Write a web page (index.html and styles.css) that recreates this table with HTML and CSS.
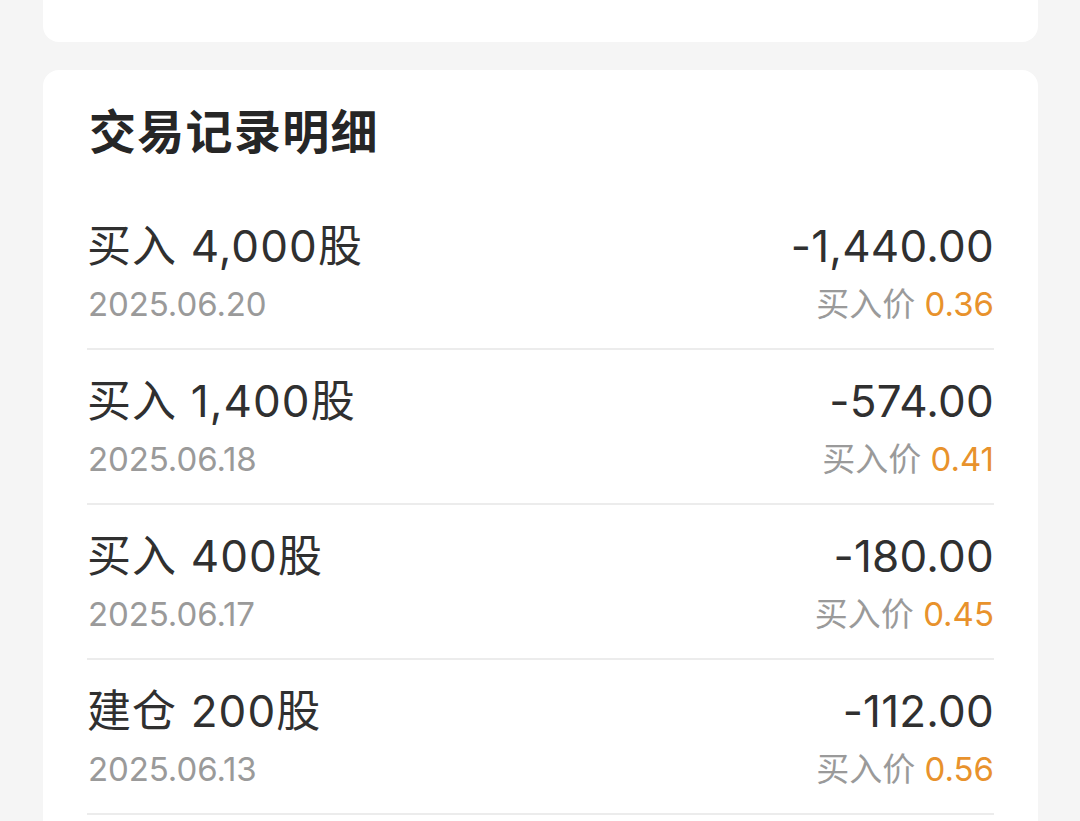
FILE: index.html
```html
<!DOCTYPE html>
<html lang="zh-CN">
<head>
<meta charset="utf-8">
<link rel="stylesheet" href="styles.css">
</head>
<body>
<div class="page">
  <div class="card card-top"></div>
  <div class="card card-records">
    <h2 class="title">交易记录明细</h2>
    <div class="row">
      <div class="col-left">
        <div class="main">买入 4,000股</div>
        <div class="date">2025.06.20</div>
      </div>
      <div class="col-right">
        <div class="amount">-1,440.00</div>
        <div class="price"><span class="label">买入价</span> <span class="val">0.36</span></div>
      </div>
    </div>
    <div class="row">
      <div class="col-left">
        <div class="main">买入 1,400股</div>
        <div class="date">2025.06.18</div>
      </div>
      <div class="col-right">
        <div class="amount">-574.00</div>
        <div class="price"><span class="label">买入价</span> <span class="val">0.41</span></div>
      </div>
    </div>
    <div class="row">
      <div class="col-left">
        <div class="main">买入 400股</div>
        <div class="date">2025.06.17</div>
      </div>
      <div class="col-right">
        <div class="amount">-180.00</div>
        <div class="price"><span class="label">买入价</span> <span class="val">0.45</span></div>
      </div>
    </div>
    <div class="row">
      <div class="col-left">
        <div class="main">建仓 200股</div>
        <div class="date">2025.06.13</div>
      </div>
      <div class="col-right">
        <div class="amount">-112.00</div>
        <div class="price"><span class="label">买入价</span> <span class="val">0.56</span></div>
      </div>
    </div>
  </div>
</div>
</body>
</html>
```
FILE: styles.css
```css
html, body {
  margin: 0;
  padding: 0;
  background: #f5f5f5;
  overflow: hidden;
}
body {
  font-family: Inter, "Noto Sans CJK SC", sans-serif;
  color: #303030;
}
.page {
  padding: 0 42px 0 43px;
  display: flex;
  flex-direction: column;
  gap: 28px;
}
.card {
  background: #ffffff;
  border-radius: 16px;
}
.card-top {
  height: 62px;
  margin-top: -20px;
}
.card-records {
  padding: 31px 44px 7px 44px;
  border-bottom-left-radius: 0;
  border-bottom-right-radius: 0;
}
.title {
  margin: 0 0 38px 2px;
  font-family: "Noto Sans CJK SC", sans-serif;
  font-size: 47px;
  line-height: 56px;
  font-weight: 700;
  color: #262626;
  letter-spacing: 1.3px;
}
.row {
  display: flex;
  justify-content: space-between;
  padding-top: 22px;
  height: 131px;
  border-bottom: 2px solid #ececec;
}
.main, .amount {
  font-size: 44px;
  line-height: 58px;
  color: #303030;
}
.main {
  letter-spacing: 1.1px;
}
.amount {
  text-align: right;
  letter-spacing: 0.2px;
}
.date {
  font-size: 33px;
  line-height: 58px;
  color: #9a9a9a;
  letter-spacing: -0.1px;
  padding-left: 1px;
}
.price {
  font-size: 33px;
  line-height: 58px;
  text-align: right;
}
.label {
  color: #9a9a9a;
}
.val {
  color: #e8922c;
}
```
